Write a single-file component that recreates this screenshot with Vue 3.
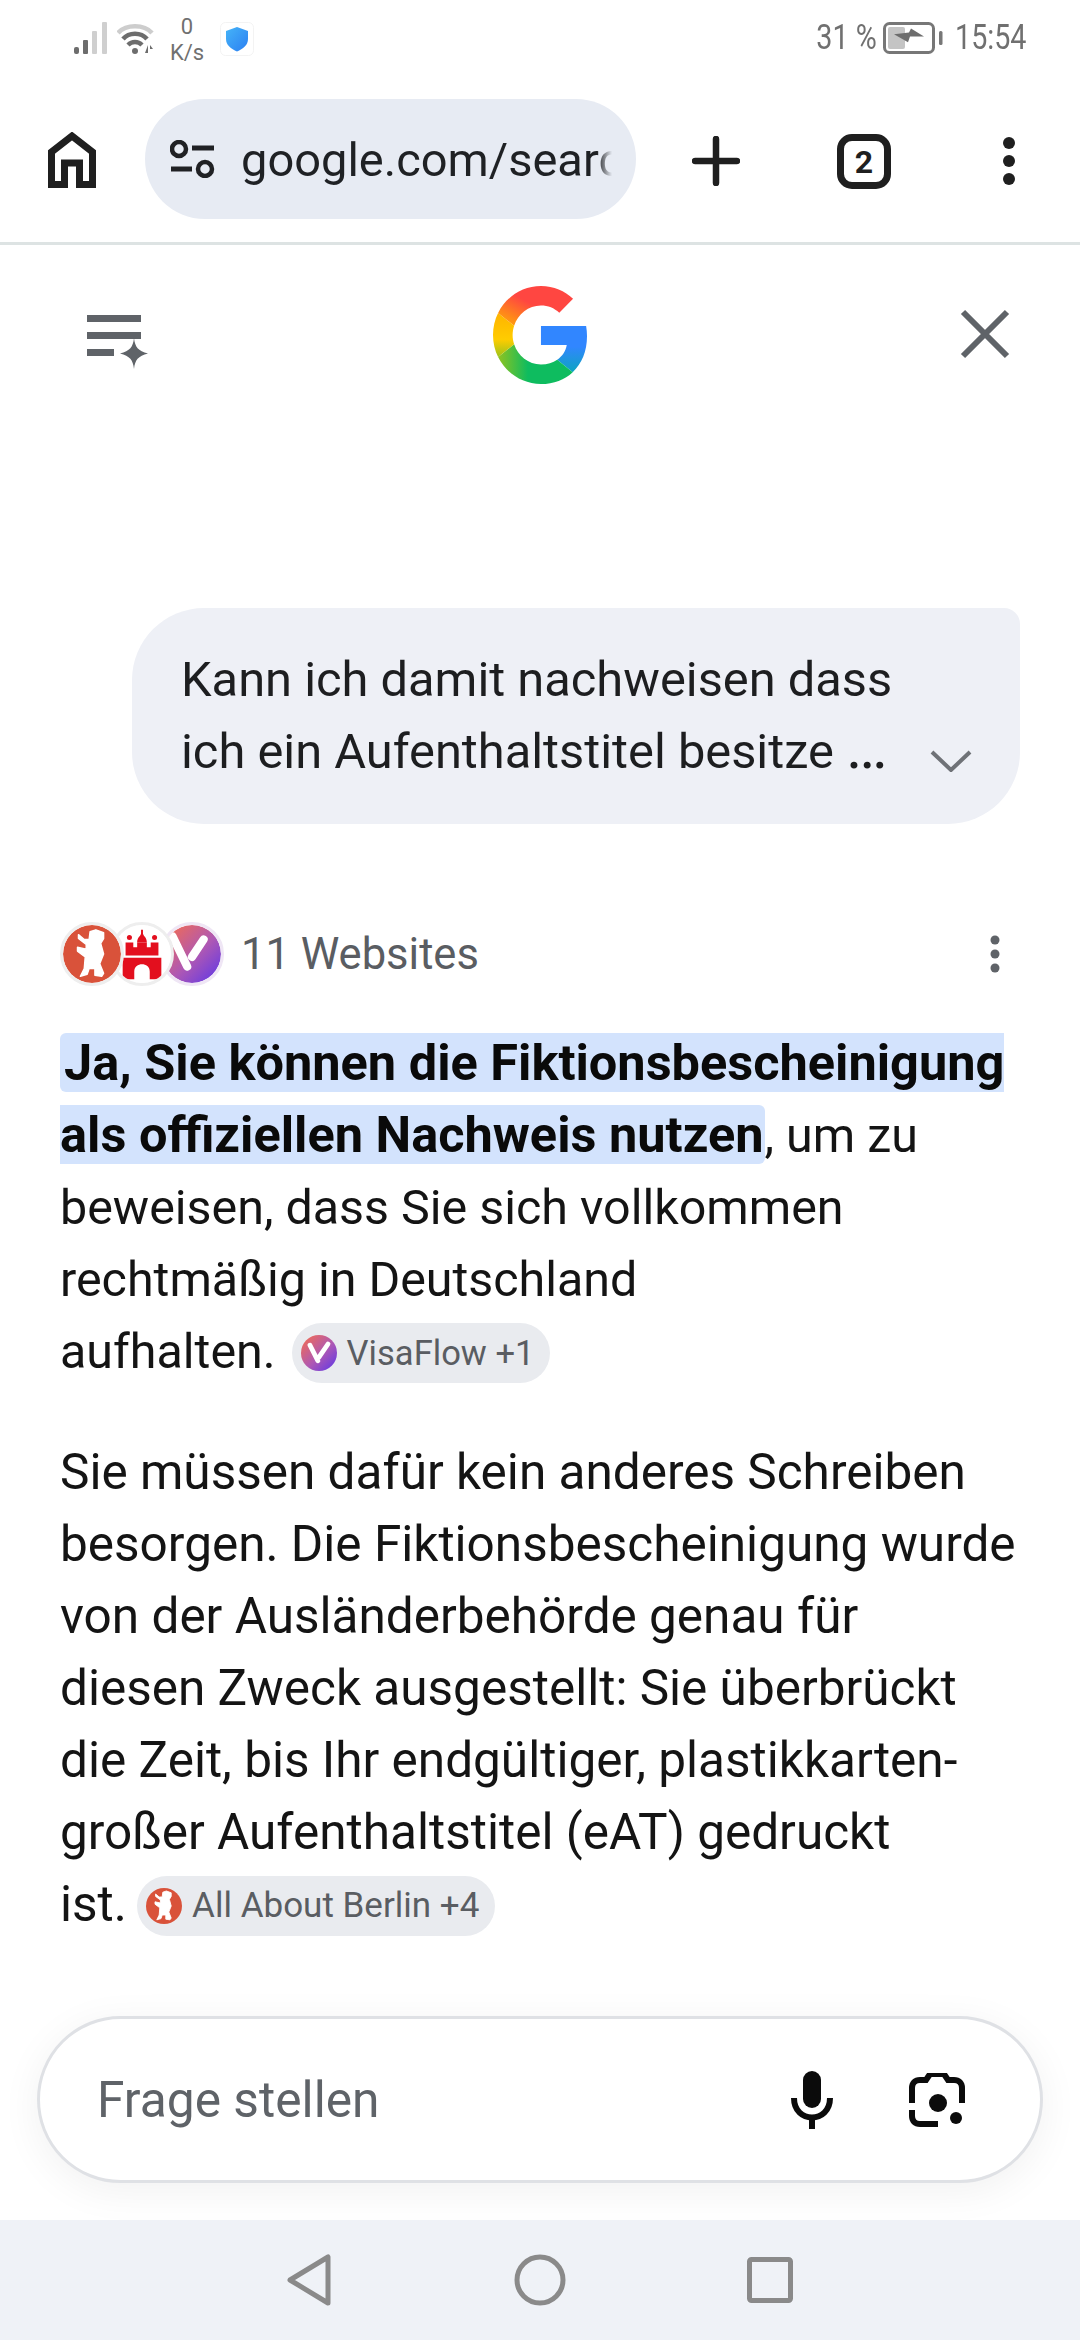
<script setup>
const toolbarDots = [146, 164, 182]
const bearPath = 'M16 10 L22 15 L27 15 L28 7 L34 5 L42 8 L42 14 L39 19 L42 30 L38 40 L42 50 L40 53 L33 52 L33 45 L27 45 L25 51 L18 53 L22 45 L23 33 L15 27 L15 23 L24 25 L24 20 L16 14 Z'
</script>

<template>
  <div class="page">
    <div class="status">
      <div class="status-left">
        <svg class="signal" width="33" height="32" viewBox="0 0 33 32">
          <rect x="0" y="25" width="5" height="7" rx="2" fill="#6d6d6d" />
          <rect x="9" y="18" width="5" height="14" rx="1" fill="#6d6d6d" />
          <rect x="18" y="9" width="5" height="23" rx="1" fill="#cfcfcf" />
          <rect x="28" y="0" width="5" height="32" rx="1" fill="#cfcfcf" />
        </svg>
        <svg class="wifi" width="37" height="32" viewBox="0 0 37 32">
          <path d="M1 11 C9 2 27 2 35 11" fill="none" stroke="#cdcdcd" stroke-width="4.5" />
          <path d="M6 17 C12 10 24 10 30 17" fill="none" stroke="#6d6d6d" stroke-width="4.5" />
          <path d="M11 23 C15 19 21 19 25 23" fill="none" stroke="#6d6d6d" stroke-width="4.5" />
          <circle cx="18" cy="29" r="3" fill="#6d6d6d" />
          <path d="M28 31 L31 23 V31 Z M33 23 L36 27 H33 Z" fill="#6d6d6d" />
        </svg>
        <div class="speed"><span>0</span><span>K/s</span></div>
        <svg class="shield" width="34" height="34" viewBox="0 0 34 34">
          <rect x="0.5" y="0.5" width="33" height="33" rx="5" fill="#fff" stroke="#f3f3f3" />
          <defs>
            <linearGradient id="sh" x1="0" y1="0" x2="1" y2="1">
              <stop offset="0" stop-color="#45b4f8" />
              <stop offset="1" stop-color="#2b7ff2" />
            </linearGradient>
          </defs>
          <path d="M17 5 L28 9 V17 C28 23 23 27 17 29.5 C11 27 6 23 6 17 V9 Z" fill="url(#sh)" />
        </svg>
      </div>
      <div class="status-right">
        <span class="narrow pct">31 %</span>
        <svg class="battery" width="60" height="32" viewBox="0 0 60 32">
          <rect x="1.5" y="1.5" width="49" height="29" rx="5" fill="none" stroke="#777" stroke-width="3" />
          <rect x="5" y="5" width="17" height="22" rx="2" fill="#c4c4c4" />
          <path d="M11 14 L26 12 L28 7 L41 17 L27 17 L25 24 Z" fill="#6d6d6d" transform="translate(0 1) scale(1 .8)" />
          <rect x="56" y="9" width="3.5" height="14" rx="1.5" fill="#777" />
        </svg>
        <span class="narrow time">15:54</span>
      </div>
    </div>

    <div class="toolbar">
      <svg class="home" width="48" height="56" viewBox="0 0 48 56">
        <path d="M3.5 52.5 V20 L24 4 L44.5 20 V52.5 H31.5 V31 H16.5 V52.5 Z" fill="none" stroke="#1f1f1f" stroke-width="7" />
      </svg>
      <div class="pill">
        <svg width="45" height="38" viewBox="0 0 45 38">
          <circle cx="9" cy="9" r="7" fill="none" stroke="#202124" stroke-width="4.5" />
          <path d="M22 8 H44" stroke="#202124" stroke-width="5" />
          <path d="M1 29 H22" stroke="#202124" stroke-width="5" />
          <circle cx="35" cy="29" r="7" fill="none" stroke="#202124" stroke-width="4.5" />
        </svg>
        <div class="url">google.com/search</div>
      </div>
      <svg class="plus" width="48" height="50" viewBox="0 0 48 50">
        <path d="M24 3 V47 M3 25 H45" stroke="#1f1f1f" stroke-width="6.5" stroke-linecap="round" />
      </svg>
      <div class="tabs">2</div>
      <svg class="dots" width="14" height="56" viewBox="0 0 14 56">
        <circle v-for="y in toolbarDots" :key="y" cx="7" :cy="y - 137" r="6" fill="#1f1f1f" />
      </svg>
    </div>

    <div class="panel-head">
      <svg width="62" height="54" viewBox="0 0 62 54">
        <path d="M0 3.5 H54 M0 20.5 H54 M0 37.5 H27" stroke="#5f6368" stroke-width="7" />
        <path d="M47 23 C48 32 51 36 61 38.5 C51 41 48 45 47 54 C46 45 43 41 33 38.5 C43 36 46 32 47 23 Z" fill="#5f6368" />
      </svg>
      <svg class="g" width="94" height="98" viewBox="2 2 43.12 44" preserveAspectRatio="none">
        <defs>
          <linearGradient id="gb" x1="0" y1="0" x2="0" y2="1">
            <stop offset=".45" stop-color="#3186ff" />
            <stop offset="1" stop-color="#0da4c0" />
          </linearGradient>
          <linearGradient id="gg" x1="0" y1="0" x2="1" y2="0">
            <stop offset="0" stop-color="#8fc31f" />
            <stop offset=".4" stop-color="#0ebc5f" />
            <stop offset="1" stop-color="#0ebc5f" />
          </linearGradient>
          <linearGradient id="gy" x1="0" y1="0" x2="0" y2="1">
            <stop offset="0" stop-color="#ffb300" />
            <stop offset=".6" stop-color="#ffcc00" />
            <stop offset="1" stop-color="#9cc31a" />
          </linearGradient>
          <linearGradient id="gr" x1="1" y1="0" x2="0" y2="1">
            <stop offset=".5" stop-color="#ff4641" />
            <stop offset="1" stop-color="#ffb300" />
          </linearGradient>
        </defs>
        <path fill="url(#gb)" d="M45.12 24.5c0-1.56-.14-3.06-.4-4.5H24v8.51h11.84c-.51 2.75-2.06 5.08-4.39 6.64l7.11 5.52c4.16-3.83 6.56-9.47 6.56-16.17z" />
        <path fill="url(#gg)" d="M24 46c5.94 0 10.92-1.97 14.56-5.33l-7.11-5.52c-1.97 1.32-4.49 2.12-7.45 2.12-5.73 0-10.58-3.87-12.31-9.07l-7.35 5.7C7.96 41.07 15.4 46 24 46z" />
        <path fill="url(#gy)" d="M11.69 28.18C11.25 26.86 11 25.45 11 24s.25-2.86.69-4.18l-7.35-5.7C2.85 17.09 2 20.45 2 24c0 3.55.85 6.91 2.34 9.88l7.35-5.7z" />
        <path fill="url(#gr)" d="M24 10.75c3.23 0 6.13 1.11 8.41 3.29l6.31-6.31C34.91 4.18 29.93 2 24 2 15.4 2 7.96 6.93 4.34 14.12l7.35 5.7c1.73-5.2 6.58-9.07 12.31-9.07z" />
      </svg>
      <svg width="50" height="50" viewBox="0 0 50 50">
        <path d="M3 3 L47 47 M47 3 L3 47" stroke="#5f6368" stroke-width="6" />
      </svg>
    </div>

    <div class="bubble">
      Kann ich damit nachweisen dass<br />ich ein Aufenthaltstitel besitze <span class="ellipsis">…</span>
      <svg class="chevron" width="42" height="22" viewBox="0 0 42 22">
        <path d="M2 2 L21 20 L40 2" fill="none" stroke="#6f7277" stroke-width="4" />
      </svg>
    </div>

    <div class="sources">
      <div class="stack">
        <span class="fav fav-berlin">
          <svg viewBox="0 0 60 60"><circle cx="30" cy="30" r="30" fill="#d9523a" /><path :d="bearPath" fill="#fff" stroke="#fff" stroke-width="1.5" stroke-linejoin="round" /></svg>
        </span>
        <span class="fav fav-hh">
          <svg viewBox="0 0 60 60">
            <circle cx="30" cy="30" r="30" fill="#fff" />
            <path d="M10 34 H50 V56 H38 V48 C38 38 22 38 22 48 V56 H10 Z" fill="#e30f1e" />
            <path d="M13 18 H21 V23 H25 V18 H35 V23 H39 V18 H47 V31.5 H13 Z" fill="#e30f1e" />
            <path d="M25 18 C25 13 28 12 29 9 V5 H31 V9 C32 12 35 13 35 18 Z" fill="#e30f1e" />
            <circle cx="17" cy="13" r="2.6" fill="#e30f1e" />
            <circle cx="43" cy="13" r="2.6" fill="#e30f1e" />
          </svg>
        </span>
        <span class="fav fav-v">
          <svg viewBox="0 0 60 60">
            <defs>
              <linearGradient id="vf" x1="0" y1="0" x2="1" y2="1">
                <stop offset=".1" stop-color="#ec6a5c" />
                <stop offset=".55" stop-color="#ae58b4" />
                <stop offset="1" stop-color="#5a35ea" />
              </linearGradient>
            </defs>
            <circle cx="30" cy="30" r="30" fill="url(#vf)" />
            <path d="M10 12 L25 43 M42 15 L30 33" fill="none" stroke="#fff" stroke-width="8.5" stroke-linecap="round" />
          </svg>
        </span>
      </div>
      <span class="count">11 Websites</span>
      <svg class="more" width="12" height="40" viewBox="0 0 12 40">
        <circle cx="6" cy="6" r="4.5" fill="#5f6368" />
        <circle cx="6" cy="20" r="4.5" fill="#5f6368" />
        <circle cx="6" cy="34" r="4.5" fill="#5f6368" />
      </svg>
    </div>

    <div class="answer">
      <p class="first">
        <span class="mark">Ja, Sie können die Fiktionsbescheinigung<br />als offiziellen Nachweis nutzen</span>, um zu<br />
        beweisen, dass Sie sich vollkommen<br />
        rechtmäßig in Deutschland<br />
        aufhalten.
        <span class="chip">
          <svg width="36" height="36" viewBox="0 0 60 60">
            <circle cx="30" cy="30" r="30" fill="url(#vf)" />
            <path d="M15 17 L28 43 M45 15 L30 37" fill="none" stroke="#fff" stroke-width="8" stroke-linecap="round" />
          </svg>
          VisaFlow +1
        </span>
      </p>
      <p class="second">
        Sie müssen dafür kein anderes Schreiben<br />
        besorgen. Die Fiktionsbescheinigung wurde<br />
        von der Ausländerbehörde genau für<br />
        diesen Zweck ausgestellt: Sie überbrückt<br />
        die Zeit, bis Ihr endgültiger, plastikkarten-<br />
        großer Aufenthaltstitel (eAT) gedruckt<br />
        ist.
        <span class="chip">
          <svg width="36" height="36" viewBox="0 0 60 60">
            <circle cx="30" cy="30" r="30" fill="#d9523a" />
            <path :d="bearPath" fill="#fff" stroke="#fff" stroke-width="1.5" stroke-linejoin="round" />
          </svg>
          All About Berlin +4
        </span>
      </p>
    </div>

    <div class="ask-wrap">
      <div class="ask">
        <span class="ask-text">Frage stellen</span>
        <svg width="42" height="58" viewBox="0 0 42 58">
          <rect x="12" y="0" width="18" height="37" rx="9" fill="#0b0b0b" />
          <path d="M3 27 C3 53 39 53 39 27" fill="none" stroke="#0b0b0b" stroke-width="6" />
          <path d="M21 44 V58" stroke="#0b0b0b" stroke-width="6" />
        </svg>
        <svg width="56" height="54" viewBox="0 0 56 54">
          <path d="M3 30 V15 C3 10 6 7 11 7 H17 L21 1 H35 L39 7 H45 C50 7 53 10 53 15 V30" fill="none" stroke="#0b0b0b" stroke-width="6" />
          <path d="M3 37 V43 C3 48 6 51 11 51 H29" fill="none" stroke="#0b0b0b" stroke-width="6" />
          <circle cx="29" cy="30" r="9" fill="#0b0b0b" />
          <circle cx="47" cy="45" r="6" fill="#0b0b0b" />
        </svg>
      </div>
    </div>

    <div class="nav">
      <svg width="46" height="52" viewBox="0 0 46 52">
        <path d="M41 3 V49 L3 26 Z" fill="none" stroke="#8a8a8a" stroke-width="5" stroke-linejoin="round" />
      </svg>
      <svg width="52" height="52" viewBox="0 0 52 52">
        <circle cx="26" cy="26" r="23" fill="none" stroke="#8a8a8a" stroke-width="5" />
      </svg>
      <svg width="46" height="46" viewBox="0 0 46 46">
        <rect x="2.5" y="2.5" width="41" height="41" rx="2" fill="none" stroke="#8a8a8a" stroke-width="5" />
      </svg>
    </div>
  </div>
</template>

<style scoped>
.page {
  width: 1080px;
  height: 2340px;
  display: flex;
  flex-direction: column;
  overflow: hidden;
  background: #fff;
  font-family: Roboto, "Noto Sans", sans-serif;
  color: #111;
}

.status {
  height: 75px;
  padding: 22px 58px 0 74px;
  box-sizing: border-box;
  display: flex;
  justify-content: space-between;
  align-items: flex-start;
  color: #707070;
}

.status-left {
  display: flex;
  align-items: flex-start;
}

.wifi {
  margin-left: 10px;
}

.speed {
  width: 50px;
  margin-left: 8px;
  margin-top: -8px;
  display: flex;
  flex-direction: column;
  align-items: center;
  font-size: 22px;
  line-height: 26px;
}

.shield {
  margin-left: 8px;
}

.status-right {
  display: flex;
  align-items: center;
  height: 32px;
}

.narrow {
  display: inline-block;
  font-size: 35px;
  line-height: 32px;
  transform: scaleX(0.82);
}

.pct {
  margin-right: 0;
  transform-origin: right center;
}

.battery {
  margin: 0 6px 0 6px;
}

.time {
  transform-origin: left center;
  width: 67px;
  margin-left: 6px;
}

.toolbar {
  height: 170px;
  box-sizing: border-box;
  border-bottom: 3px solid #dde3e3;
  display: flex;
  align-items: flex-start;
  position: relative;
}

.home {
  margin: 57px 0 0 48px;
}

.pill {
  width: 491px;
  height: 120px;
  margin: 24px 0 0 49px;
  padding-left: 25px;
  box-sizing: border-box;
  border-radius: 60px;
  background: #e7ebf3;
  display: flex;
  align-items: center;
  gap: 26px;
}

.url {
  width: 371px;
  overflow: hidden;
  white-space: nowrap;
  font-size: 47px;
  color: #1f2124;
  -webkit-mask-image: linear-gradient(to right, #000 96%, transparent);
  mask-image: linear-gradient(to right, #000 96%, transparent);
}

.plus {
  margin: 61px 0 0 56px;
}

.tabs {
  width: 54px;
  height: 55px;
  margin: 59px 0 0 97px;
  box-sizing: border-box;
  border: 7px solid #1f1f1f;
  border-radius: 15px;
  display: flex;
  align-items: center;
  justify-content: center;
  font-size: 32px;
  font-weight: 700;
  color: #1f1f1f;
}

.dots {
  margin: 59px 0 0 111px;
}

.panel-head {
  height: 140px;
  padding: 42px 70px 0 87px;
  box-sizing: border-box;
  display: flex;
  justify-content: space-between;
  align-items: flex-start;
}

.panel-head .g {
  margin-top: -1px;
  margin-left: -30px;
}

.panel-head svg:first-child {
  margin-top: 28px;
}

.panel-head svg:last-child {
  margin-top: 22px;
}

.bubble {
  position: relative;
  align-self: flex-end;
  width: 888px;
  margin: 223px 60px 0 0;
  padding: 36px 0 36px 49px;
  box-sizing: border-box;
  background: #eef0f6;
  border-radius: 72px 16px 72px 72px;
  font-size: 48.8px;
  line-height: 72px;
  color: #1d1e20;
}

.ellipsis {
  font-size: 62px;
  line-height: 0;
}

.chevron {
  position: absolute;
  right: 48px;
  bottom: 52px;
}

.sources {
  height: 66px;
  margin-top: 97px;
  padding: 0 79px 0 60px;
  display: flex;
  align-items: center;
}

.stack {
  display: flex;
}

.fav {
  width: 64px;
  height: 64px;
  box-sizing: border-box;
  border: 3px solid #eee;
  border-radius: 50%;
  background: #fff;
  overflow: hidden;
  display: block;
}

.fav svg {
  display: block;
  width: 100%;
  height: 100%;
}

.fav + .fav {
  margin-left: -14px;
}

.fav-berlin {
  position: relative;
  z-index: 3;
}

.fav-hh {
  position: relative;
  z-index: 2;
}

.fav-v {
  position: relative;
  z-index: 1;
  border-color: #efe6f5;
}

.count {
  margin-left: 17px;
  font-size: 43.5px;
  color: #5a5d62;
}

.more {
  margin-left: auto;
}

.answer {
  padding: 0 20px 0 60px;
  margin-top: 41px;
  line-height: 72px;
  color: #141414;
}

.answer p {
  margin: 0 0 48px;
  white-space: nowrap;
}

.first {
  font-size: 48.4px;
}

.second {
  font-size: 49.5px;
}

.mark {
  font-weight: 700;
  font-size: 50.5px;
  line-height: 1;
  color: #0a0a0a;
  background: #d3e3fd;
  padding: 0 1px 0 4px;
  border-radius: 6px;
}

.chip {
  display: inline-flex;
  align-items: center;
  gap: 10px;
  height: 60px;
  padding: 0 16px 0 9px;
  margin-left: 4px;
  border-radius: 30px;
  background: #e9ebef;
  font-size: 34.6px;
  line-height: 60px;
  color: #5a5d62;
  vertical-align: -3px;
}

.second .chip {
  margin-left: -2px;
  font-size: 35px;
}

.ask-wrap {
  margin-top: auto;
  padding: 0 37px 37px;
}

.ask {
  height: 167px;
  box-sizing: border-box;
  border: 3px solid #dfe1e5;
  border-radius: 84px;
  background: #fff;
  box-shadow: 0 8px 40px rgba(0, 0, 0, 0.06);
  padding: 0 75px 0 57px;
  display: flex;
  align-items: center;
}

.ask-text {
  flex: 1;
  font-size: 49.7px;
  color: #5f6368;
}

.ask svg:last-child {
  margin-left: 76px;
}

.nav {
  height: 120px;
  background: #eff2f7;
  padding: 0 287px 0 287px;
  box-sizing: border-box;
  display: flex;
  justify-content: space-between;
  align-items: center;
}
</style>

<style>
html,
body {
  margin: 0;
  background: #fff;
}
</style>
